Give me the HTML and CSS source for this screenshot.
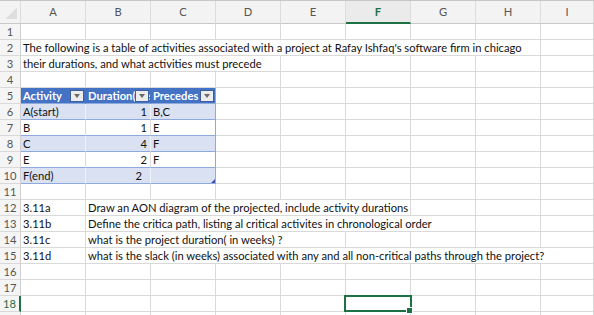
FILE: index.html
```html
<!DOCTYPE html>
<html>
<head>
<meta charset="utf-8">
<link rel="stylesheet" href="styles.css">
</head>
<body>
<div class="sheet">
  <div class="c h corner"></div>
  <div class="c h">A</div><div class="c h">B</div><div class="c h">C</div><div class="c h">D</div><div class="c h">E</div><div class="c h hsel">F</div><div class="c h">G</div><div class="c h">H</div><div class="c h">I</div>

  <div class="c r">1</div>
  <div class="c"></div><div class="c"></div><div class="c"></div><div class="c"></div><div class="c"></div><div class="c"></div><div class="c"></div><div class="c"></div><div class="c"></div>

  <div class="c r">2</div>
  <div class="c span8">The following is a table of activities associated with a project at Rafay Ishfaq's software firm in chicago</div><div class="c"></div>

  <div class="c r">3</div>
  <div class="c span4">their durations, and what activities must precede</div><div class="c"></div><div class="c"></div><div class="c"></div><div class="c"></div><div class="c"></div>

  <div class="c r">4</div>
  <div class="c"></div><div class="c"></div><div class="c"></div><div class="c"></div><div class="c"></div><div class="c"></div><div class="c"></div><div class="c"></div><div class="c"></div>

  <div class="c r">5</div>
  <div class="c th">Activity<span class="flt"></span></div><div class="c th">Duration(weeks)<span class="flt"></span></div><div class="c th tl">Precedes<span class="flt"></span></div>
  <div class="c"></div><div class="c"></div><div class="c"></div><div class="c"></div><div class="c"></div><div class="c"></div>

  <div class="c r">6</div>
  <div class="c tb band">A(start)</div><div class="c tb band num">1</div><div class="c tb band tl">B,C</div>
  <div class="c"></div><div class="c"></div><div class="c"></div><div class="c"></div><div class="c"></div><div class="c"></div>

  <div class="c r">7</div>
  <div class="c tb">B</div><div class="c tb num">1</div><div class="c tb tl">E</div>
  <div class="c"></div><div class="c"></div><div class="c"></div><div class="c"></div><div class="c"></div><div class="c"></div>

  <div class="c r">8</div>
  <div class="c tb band">C</div><div class="c tb band num">4</div><div class="c tb band tl">F</div>
  <div class="c"></div><div class="c"></div><div class="c"></div><div class="c"></div><div class="c"></div><div class="c"></div>

  <div class="c r">9</div>
  <div class="c tb">E</div><div class="c tb num">2</div><div class="c tb tl">F</div>
  <div class="c"></div><div class="c"></div><div class="c"></div><div class="c"></div><div class="c"></div><div class="c"></div>

  <div class="c r">10</div>
  <div class="c tb band">F(end)</div><div class="c tb band num txtnum">2</div><div class="c tb band tl last"><span class="grip"></span></div>
  <div class="c"></div><div class="c"></div><div class="c"></div><div class="c"></div><div class="c"></div><div class="c"></div>

  <div class="c r">11</div>
  <div class="c"></div><div class="c"></div><div class="c"></div><div class="c"></div><div class="c"></div><div class="c"></div><div class="c"></div><div class="c"></div><div class="c"></div>

  <div class="c r">12</div>
  <div class="c">3.11a</div><div class="c span5">Draw an AON diagram of the projected, include activity durations</div><div class="c"></div><div class="c"></div><div class="c"></div>

  <div class="c r">13</div>
  <div class="c">3.11b</div><div class="c span6">Define the critica path, listing al critical activites in chronological order</div><div class="c"></div><div class="c"></div>

  <div class="c r">14</div>
  <div class="c">3.11c</div><div class="c span4">what is the project duration( in weeks) ?</div><div class="c"></div><div class="c"></div><div class="c"></div><div class="c"></div>

  <div class="c r">15</div>
  <div class="c">3.11d</div><div class="c span8">what is the slack (in weeks) associated with any and all non-critical paths through the project?</div>

  <div class="c r">16</div>
  <div class="c"></div><div class="c"></div><div class="c"></div><div class="c"></div><div class="c"></div><div class="c"></div><div class="c"></div><div class="c"></div><div class="c"></div>

  <div class="c r">17</div>
  <div class="c"></div><div class="c"></div><div class="c"></div><div class="c"></div><div class="c"></div><div class="c"></div><div class="c"></div><div class="c"></div><div class="c"></div>

  <div class="c r rsel">18</div>
  <div class="c"></div><div class="c"></div><div class="c"></div><div class="c"></div><div class="c"></div><div class="c sel"><span class="handle"></span></div><div class="c"></div><div class="c"></div><div class="c"></div>

  <div class="c r"></div>
  <div class="c"></div><div class="c"></div><div class="c"></div><div class="c"></div><div class="c"></div><div class="c"></div><div class="c"></div><div class="c"></div><div class="c"></div>
</div>
</body>
</html>
```
FILE: styles.css
```css
html, body {
  margin: 0;
  background: #ffffff;
}
body {
  font-family: Lato, "Liberation Sans", sans-serif;
  font-size: 11.2px;
  color: #111;
  overflow: hidden;
}
.sheet {
  display: grid;
  grid-template-columns: 21px repeat(8, 65px) 1fr;
  grid-template-rows: 23px;
  grid-auto-rows: 16px;
  border-top: 1px solid #c6c6c6;
}
.c {
  box-sizing: border-box;
  border-right: 1px solid #d9d9d9;
  border-bottom: 1px solid #d9d9d9;
  white-space: nowrap;
  overflow: hidden;
  padding: 0 2px;
  line-height: 15px;
  position: relative;
}
.span4 { grid-column: span 4; }
.span5 { grid-column: span 5; }
.span6 { grid-column: span 6; }
.span8 { grid-column: span 8; }

.h {
  background: #f3f3f3;
  color: #555;
  text-align: center;
  line-height: 22px;
  border-bottom-color: #c8c8c8;
  border-right-color: #dcdcdc;
}
.corner {
  background: linear-gradient(135deg, #f3f3f3 55%, #dedede 55%) no-repeat;
  background-size: 13px 13px;
  background-position: 4px 5px;
  background-color: #f3f3f3;
}
.hsel {
  color: #1e7145;
  font-weight: bold;
  background: #ebebeb;
  border-bottom: 2px solid #1e7145;
  line-height: 21px;
}
.r {
  background: #f5f5f5;
  color: #555;
  text-align: center;
  padding: 0;
  border-right-color: #d0d0d0;
}
.rsel {
  color: #1e7145;
  border-right: 2px solid #1e7145;
}

/* table */
.th {
  background: #4472c4;
  color: #ffffff;
  font-weight: bold;
  border-right-color: #4472c4;
  border-bottom-color: #8ea9db;
}
.tb {
  border-bottom-color: #8ea9db;
  border-right-color: #dcdcdc;
}
.band {
  background: #d9e1f2;
  border-right-color: #eef1f8;
}
.tl {
  border-right-color: #8ea9db;
}
.band.tl { border-right-color: #8ea9db; }
.num { text-align: right; padding-right: 3px; }
.num.txtnum { padding-right: 8px; }
.flt {
  position: absolute;
  right: 1px;
  top: 2px;
  width: 14px;
  height: 12px;
  box-sizing: border-box;
  background: #ececec;
  border: 1px solid #3d5f9e;
}
.flt::after {
  content: "";
  position: absolute;
  left: 3px;
  top: 3px;
  border-left: 3.5px solid transparent;
  border-right: 3.5px solid transparent;
  border-top: 4px solid #6a6a6a;
}
.grip {
  position: absolute;
  right: 0;
  bottom: 0;
  width: 0;
  height: 0;
  border-left: 4px solid transparent;
  border-bottom: 4px solid #3f51a8;
}

/* selection */
.sel { overflow: visible; }
.sel::after {
  content: "";
  position: absolute;
  left: -2px;
  top: -1px;
  right: -2px;
  bottom: -1px;
  border: 2px solid #1e7145;
}
.handle {
  position: absolute;
  right: -3px;
  bottom: -3px;
  width: 5px;
  height: 5px;
  background: #1e7145;
  border: 1px solid #ffffff;
  z-index: 2;
}
```
